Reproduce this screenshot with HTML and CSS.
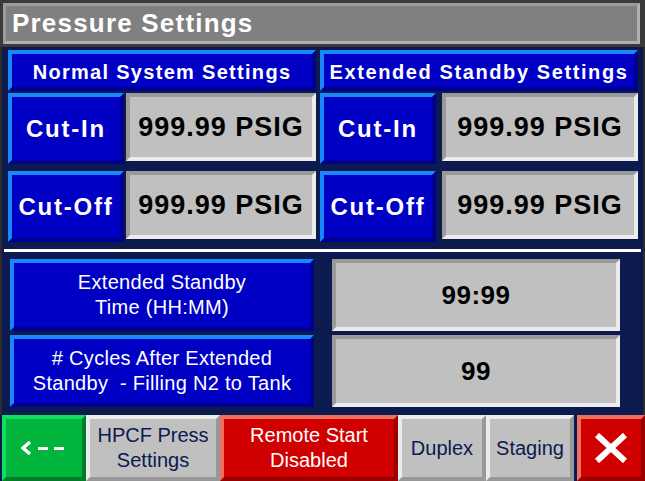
FILE: index.html
```html
<!DOCTYPE html>
<html lang="en">
<head>
  <meta charset="UTF-8">
  <meta name="viewport" content="width=device-width, initial-scale=1.0">
  <title>Pressure Settings</title>
  <link rel="stylesheet" href="styles.css">
</head>
<body>
  <div class="screen">
    <div class="title-wrap">
      <div class="title-bar">Pressure Settings</div>
    </div>

    <div class="panel">
      <div class="top-section">
        <div class="group group-left">
          <div class="btn-blue header">Normal System Settings</div>
          <div class="row">
            <div class="btn-blue label">Cut-In</div>
            <div class="value">999.99 PSIG</div>
          </div>
          <div class="row row-second">
            <div class="btn-blue label">Cut-Off</div>
            <div class="value">999.99 PSIG</div>
          </div>
        </div>
        <div class="group group-right">
          <div class="btn-blue header">Extended Standby Settings</div>
          <div class="row">
            <div class="btn-blue label">Cut-In</div>
            <div class="value">999.99 PSIG</div>
          </div>
          <div class="row row-second">
            <div class="btn-blue label">Cut-Off</div>
            <div class="value">999.99 PSIG</div>
          </div>
        </div>
      </div>

      <div class="divider"></div>

      <div class="lower-section">
        <div class="btn-blue text-btn">Extended Standby<br>Time (HH:MM)</div>
        <div class="value small-value">99:99</div>
        <div class="btn-blue text-btn"># Cycles After Extended<br>Standby&nbsp; - Filling N2 to Tank</div>
        <div class="value small-value">99</div>
      </div>
    </div>

    <div class="nav-bar">
      <div class="nav-btn nav-green back">
        <svg width="46" height="14" viewBox="0 0 46 14">
          <path d="M9 1 L2 7 L9 13" fill="none" stroke="#fff" stroke-width="3.5"/>
          <rect x="17" y="6" width="10" height="3" fill="#fff"/>
          <rect x="33" y="6" width="10" height="3" fill="#fff"/>
        </svg>
      </div>
      <div class="nav-btn nav-gray hpcf">HPCF Press<br>Settings</div>
      <div class="nav-btn nav-red remote">Remote Start<br>Disabled</div>
      <div class="nav-btn nav-gray duplex">Duplex</div>
      <div class="nav-btn nav-gray staging">Staging</div>
      <div class="nav-btn nav-red close">
        <svg width="34" height="30" viewBox="0 0 34 30">
          <path d="M3 2 L31 28 M31 2 L3 28" stroke="#fff" stroke-width="6"/>
        </svg>
      </div>
    </div>
  </div>
</body>
</html>
```

FILE: styles.css
```css
body {
  margin: 0;
  padding: 0;
  background-color: #2b2b2b;
  font-family: 'Liberation Sans', Arial, sans-serif;
}

.screen {
  width: 645px;
  height: 481px;
  display: flex;
  flex-direction: column;
  background-color: #2b2b2b;
  overflow: hidden;
}

.title-wrap {
  padding: 3px 5px 3px 3px;
  background-color: #3a3a3a;
}

.title-bar {
  height: 41px;
  box-sizing: border-box;
  background-color: #808080;
  border: 3px solid;
  border-color: #9c9c9c #b0b0b0 #b0b0b0 #9c9c9c;
  color: #fff;
  font-size: 26px;
  font-weight: bold;
  line-height: 35px;
  padding-left: 6px;
  letter-spacing: 1.2px;
}

.panel {
  margin-left: 2px;
  margin-right: 2px;
  background-color: #0b1a4f;
  padding: 3px 5px 8px 6px;
  display: flex;
  flex-direction: column;
}

.top-section {
  display: grid;
  grid-template-columns: 308px 318px;
  column-gap: 4px;
}

.group {
  display: flex;
  flex-direction: column;
}

.row {
  display: grid;
  grid-template-columns: 116px 1fr;
  align-items: start;
  margin-top: 2px;
  height: 71px;
}

.row-second {
  margin-top: 7px;
}

.group-left .row {
  column-gap: 2px;
}

.group-right .row {
  column-gap: 6px;
}

.btn-blue {
  box-sizing: border-box;
  background-color: #0000c4;
  border: 4px solid;
  border-color: #1888ff #00008c #00008c #1888ff;
  color: #fff;
  display: flex;
  align-items: center;
  justify-content: center;
  text-align: center;
}

.header {
  font-size: 20px;
  font-weight: bold;
  letter-spacing: 1.3px;
  height: 41px;
  padding-top: 4px;
}

.group-right .header {
  letter-spacing: 1.6px;
}

.label {
  height: 71px;
  font-size: 24px;
  font-weight: bold;
  letter-spacing: 1.8px;
}

.value {
  box-sizing: border-box;
  background-color: #c0c0c0;
  border: 4px solid;
  border-color: #9a9a9a #ececec #ececec #9a9a9a;
  color: #000;
  display: flex;
  align-items: center;
  justify-content: center;
  font-size: 27px;
  font-weight: bold;
  letter-spacing: 1px;
  height: 68px;
}

.divider {
  height: 3px;
  background-color: #fff;
  margin: 7px -3px 7px -4px;
}

.lower-section {
  display: grid;
  grid-template-columns: 304px 288px;
  grid-template-rows: 72px 72px;
  column-gap: 18px;
  row-gap: 4px;
  padding-left: 2px;
}

.text-btn {
  font-size: 20px;
  line-height: 25px;
  letter-spacing: 0.3px;
}

.small-value {
  height: 72px;
  font-size: 26px;
  letter-spacing: 0.5px;
}

.nav-bar {
  display: flex;
  height: 66px;
  padding-left: 2px;
  background-color: #0b1a4f;
}

.nav-btn {
  box-sizing: border-box;
  height: 66px;
  border: 4px solid;
  display: flex;
  align-items: center;
  justify-content: center;
  text-align: center;
  font-size: 20px;
  line-height: 25px;
}

.nav-green {
  background-color: #00b43c;
  border-color: #10e060 #007c28 #007c28 #10e060;
}

.nav-gray {
  background-color: #c0c0c0;
  border-color: #ececec #989898 #989898 #ececec;
  color: #0b1a4f;
}

.nav-red {
  background-color: #d00000;
  border-color: #f07060 #980000 #980000 #f07060;
  color: #fff;
}

.back { width: 84px; }
.hpcf { width: 134px; }
.remote { width: 178px; }
.duplex { width: 88px; }
.staging { width: 88px; margin-right: 3px; }
.close { width: 68px; }
```
